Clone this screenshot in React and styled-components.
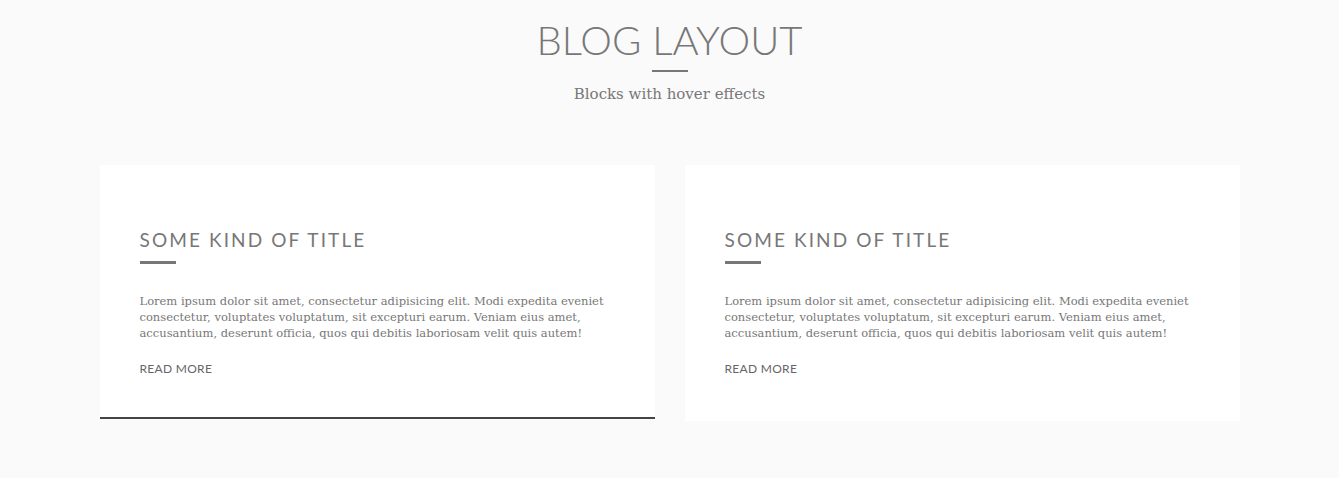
import React from 'react';
import styled, { createGlobalStyle } from 'styled-components';

const GlobalStyle = createGlobalStyle`
  body {
    margin: 0;
    background: #fafafa;
    font-family: 'DejaVu Serif', serif;
  }
`;

const posts = [
  { id: 1, active: true },
  { id: 2, active: false },
];

const App = () => {
  return (
    <Page>
      <GlobalStyle />
      <Header>
        <h1>BLOG LAYOUT</h1>
        <span className="bar" />
        <p>Blocks with hover effects</p>
      </Header>
      <Grid>
        {posts.map((post) => (
          <Card key={post.id} $active={post.active}>
            <h2>SOME KIND OF TITLE</h2>
            <span className="bar" />
            <p>
              Lorem ipsum dolor sit amet, consectetur adipisicing elit. Modi expedita eveniet
              consectetur, voluptates voluptatum, sit excepturi earum. Veniam eius amet,
              accusantium, deserunt officia, quos qui debitis laboriosam velit quis autem!
            </p>
            <a href="#">READ MORE</a>
          </Card>
        ))}
      </Grid>
    </Page>
  );
};

const Page = styled.div`
  min-height: 478px;
  padding-top: 19px;
  box-sizing: border-box;
`;

const Header = styled.header`
  display: flex;
  flex-direction: column;
  align-items: center;
  color: #777;

  h1 {
    margin: 0;
    font-family: 'Lato', sans-serif;
    font-weight: 300;
    font-size: 40px;
    line-height: 42px;
    letter-spacing: 0;
  }

  .bar {
    display: block;
    width: 36px;
    height: 2px;
    background: #777;
    margin-top: 9px;
  }

  p {
    margin: 12px 0 0;
    font-size: 15px;
    line-height: 20px;
  }
`;

const Grid = styled.div`
  width: 1140px;
  margin: 61px auto 0;
  display: grid;
  grid-template-columns: 1fr 1fr;
  gap: 30px;
  align-items: start;
`;

const Card = styled.article`
  background: #fff;
  padding: 64px 40px 42px;
  height: ${(p) => (p.$active ? '254px' : '256px')};
  box-sizing: border-box;
  border-bottom: 2px solid ${(p) => (p.$active ? '#444' : 'transparent')};
  color: #777;

  h2 {
    margin: 0;
    font-family: 'Lato', sans-serif;
    font-weight: 400;
    font-size: 19px;
    line-height: 22px;
    letter-spacing: 2.1px;
  }

  .bar {
    display: block;
    width: 36px;
    height: 3px;
    background: #777;
    margin-top: 10px;
  }

  p {
    margin: 29px 0 0;
    font-size: 11.5px;
    line-height: 16px;
    color: #777;
  }

  a {
    display: inline-block;
    margin-top: 20px;
    font-family: 'Lato', sans-serif;
    font-size: 12px;
    letter-spacing: 0.3px;
    color: #666;
    text-decoration: none;
  }
`;

export default App;
